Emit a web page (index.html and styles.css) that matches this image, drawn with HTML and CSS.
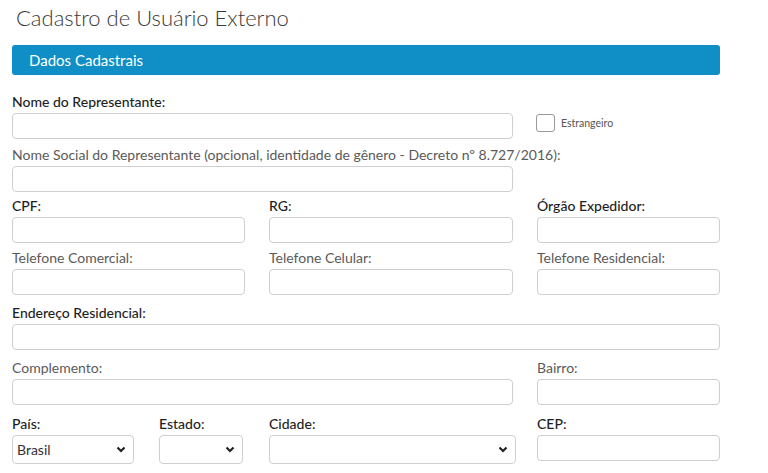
FILE: index.html
```html
<!DOCTYPE html>
<html lang="pt-BR">
<head>
<meta charset="utf-8">
<title>Cadastro de Usuário Externo</title>
<link rel="stylesheet" href="styles.css">
</head>
<body>
<div class="page">
  <h1 class="title">Cadastro de Usuário Externo</h1>
  <div class="bar">Dados Cadastrais</div>

  <div class="row row-first row-name">
    <div class="field">
      <label class="lbl strong">Nome do Representante:</label>
      <div class="input"></div>
    </div>
    <div class="check">
      <span class="box"></span>
      <span class="check-lbl">Estrangeiro</span>
    </div>
  </div>

  <div class="row row-name r2">
    <div class="field">
      <label class="lbl light">Nome Social do Representante (opcional, identidade de gênero - Decreto nº 8.727/2016):</label>
      <div class="input"></div>
    </div>
  </div>

  <div class="row row3 r3">
    <div class="field">
      <label class="lbl strong">CPF:</label>
      <div class="input"></div>
    </div>
    <div class="field">
      <label class="lbl strong">RG:</label>
      <div class="input"></div>
    </div>
    <div class="field">
      <label class="lbl strong">Órgão Expedidor:</label>
      <div class="input"></div>
    </div>
  </div>

  <div class="row row3 r4">
    <div class="field">
      <label class="lbl light">Telefone Comercial:</label>
      <div class="input"></div>
    </div>
    <div class="field">
      <label class="lbl light">Telefone Celular:</label>
      <div class="input"></div>
    </div>
    <div class="field">
      <label class="lbl light">Telefone Residencial:</label>
      <div class="input"></div>
    </div>
  </div>

  <div class="row r5">
    <div class="field">
      <label class="lbl strong">Endereço Residencial:</label>
      <div class="input"></div>
    </div>
  </div>

  <div class="row row-comp r6">
    <div class="field">
      <label class="lbl light">Complemento:</label>
      <div class="input"></div>
    </div>
    <div class="field">
      <label class="lbl light">Bairro:</label>
      <div class="input"></div>
    </div>
  </div>

  <div class="row row3 r7">
    <div class="sub">
      <div class="field">
        <label class="lbl strong">País:</label>
        <div class="select"><span>Brasil</span><svg class="chev" width="10" height="7" viewBox="0 0 10 7"><path d="M1.5 1.5 L5 5 L8.5 1.5" fill="none" stroke="#222" stroke-width="2.2"/></svg></div>
      </div>
      <div class="field">
        <label class="lbl strong">Estado:</label>
        <div class="select"><span></span><svg class="chev" width="10" height="7" viewBox="0 0 10 7"><path d="M1.5 1.5 L5 5 L8.5 1.5" fill="none" stroke="#222" stroke-width="2.2"/></svg></div>
      </div>
    </div>
    <div class="field">
      <label class="lbl strong">Cidade:</label>
      <div class="select wide"><span></span><svg class="chev" width="10" height="7" viewBox="0 0 10 7"><path d="M1.5 1.5 L5 5 L8.5 1.5" fill="none" stroke="#222" stroke-width="2.2"/></svg></div>
    </div>
    <div class="field">
      <label class="lbl strong">CEP:</label>
      <div class="input"></div>
    </div>
  </div>
</div>
</body>
</html>
```

FILE: styles.css
```css
* { box-sizing: border-box; }
html, body { margin: 0; padding: 0; background: #fff; }
body {
  font-family: Lato, "Open Sans", "DejaVu Sans", sans-serif;
  color: #333;
  width: 768px;
  height: 473px;
  overflow: hidden;
}
.page { padding: 0 48px 0 12px; }
.title {
  margin: 0 0 0 4px;
  padding-top: 4px;
  height: 45px;
  font-size: 22px;
  line-height: 28px;
  font-weight: 300;
  color: #3a3a3a;
}
.bar {
  height: 30px;
  background: #0f8fc6;
  border-radius: 3px;
  color: #fff;
  font-size: 15px;
  line-height: 30px;
  padding-left: 17px;
}
.row { display: grid; margin-top: 10px; column-gap: 24px; }
.row-first { margin-top: 19px; }
.r2 { margin-top: 8px; }
.r3 { margin-top: 6px; }
.r4 { margin-top: 7px; }
.r5 { margin-top: 10px; }
.r6 { margin-top: 10px; }
.r7 { margin-top: 11px; }
.row-name { grid-template-columns: 501px 1fr; }
.row3 { grid-template-columns: 233px 244px 183px; }
.row-comp { grid-template-columns: 501px 183px; }
.field { display: flex; flex-direction: column; min-width: 0; }
.lbl {
  display: block;
  font-size: 14px;
  line-height: 16px;
  margin-bottom: 3px;
  white-space: nowrap;
}
.strong { font-weight: 500; color: #1e1e1e; }
.light { font-weight: 400; color: #5a5a5a; }
.input {
  height: 26px;
  border: 1px solid #cfcfcf;
  border-radius: 4px;
  background: #fff;
}
.check {
  display: flex;
  align-items: center;
  gap: 6px;
  padding-top: 20px;
  margin-left: -1px;
  align-self: start;
}
.box {
  width: 19px;
  height: 18px;
  border: 1px solid #9a9a9a;
  border-radius: 3px;
}
.check-lbl { font-size: 10.5px; color: #555; }
.sub { display: grid; grid-template-columns: 122px 84px; column-gap: 25px; }
.select {
  height: 29px;
  border: 1px solid #cfcfcf;
  border-radius: 4px;
  display: flex;
  align-items: center;
  justify-content: space-between;
  padding: 0 7px 0 4px;
  font-size: 14px;
  color: #333;
}
.select.wide { width: 247px; }
.chev { display: block; }
```
